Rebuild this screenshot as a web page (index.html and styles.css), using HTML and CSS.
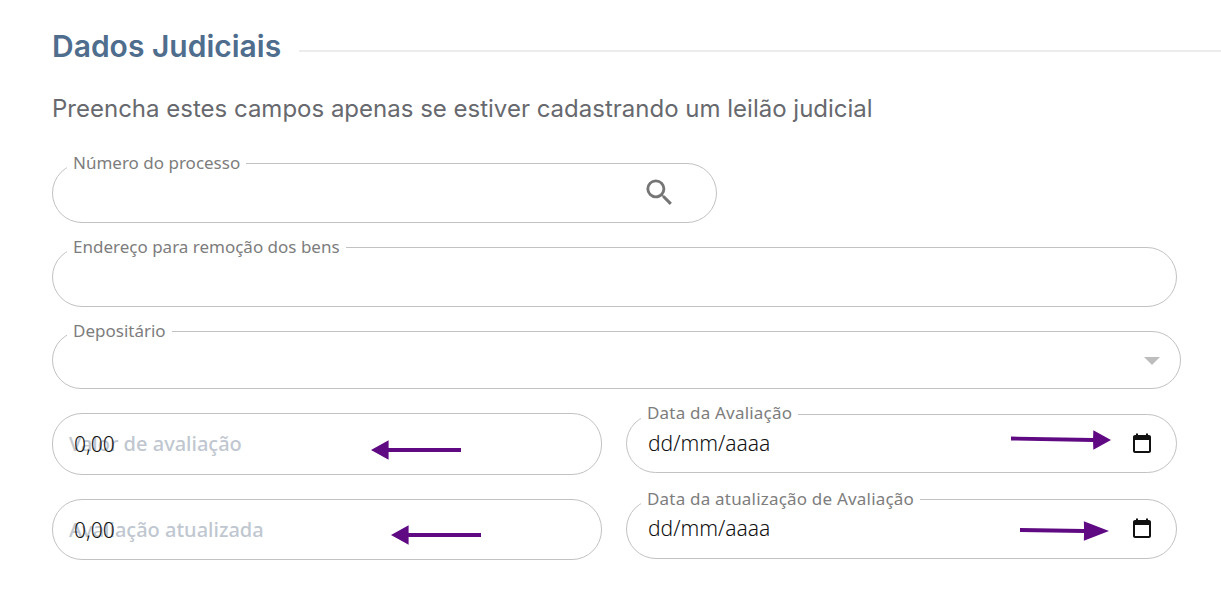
FILE: index.html
```html
<!DOCTYPE html>
<html lang="pt-BR">
<head>
<meta charset="utf-8">
<title>Dados Judiciais</title>
<link rel="stylesheet" href="styles.css">
</head>
<body>
<main class="page">
  <header class="section-head">
    <h2 class="section-title">Dados Judiciais</h2>
    <span class="section-rule"></span>
  </header>
  <p class="section-sub">Preencha estes campos apenas se estiver cadastrando um leilão judicial</p>

  <div class="form">
    <div class="field field-process">
      <span class="label">Número do processo</span>
      <svg class="icon-search" viewBox="0 0 24 24" width="35" height="35"><path fill="#757575" d="M15.5 14h-.79l-.28-.27A6.47 6.47 0 0 0 16 9.5 6.5 6.5 0 1 0 9.5 16c1.61 0 3.09-.59 4.23-1.57l.27.28v.79l5 4.99L20.49 19l-4.99-5zm-6 0C7.01 14 5 11.99 5 9.5S7.01 5 9.5 5 14 7.01 14 9.5 11.99 14 9.5 14z"/></svg>
    </div>

    <div class="field field-address">
      <span class="label">Endereço para remoção dos bens</span>
    </div>

    <div class="field field-select">
      <span class="label">Depositário</span>
      <span class="caret"></span>
    </div>

    <div class="row">
      <div class="field field-money money-a">
        <span class="ghost">Valor de avaliação</span>
        <span class="value">0,00</span>
        <svg class="arrow arrow-a" viewBox="0 0 92 20" width="90" height="20"><path fill="#5f0a82" d="M0 10 18 0v8h74v4H18v8z"/></svg>
      </div>
      <div class="field field-date date-a">
        <span class="label label-date">Data da Avaliação</span>
        <span class="date-text">dd/mm/aaaa</span>
        <svg class="arrow arrow-c" viewBox="0 0 102 20" width="100" height="20"><path fill="#5f0a82" d="M102 10 84 0l-.3 8L0 6.500v4L83.700 12l.3 8z"/></svg>
        <svg class="icon-cal" viewBox="0 0 24 24" width="24" height="24"><path fill="#111" d="M19 4h-1V2.500h-2V4H8V2.500H6V4H5c-1.100 0-2 .9-2 2v14c0 1.100.9 2 2 2h14c1.100 0 2-.9 2-2V6c0-1.100-.9-2-2-2zm0 16H5V9h14v11z"/></svg>
      </div>
    </div>

    <div class="row">
      <div class="field field-money money-b">
        <span class="ghost">Avaliação atualizada</span>
        <span class="value">0,00</span>
        <svg class="arrow arrow-b" viewBox="0 0 92 20" width="90" height="20"><path fill="#5f0a82" d="M0 10 18 0v8h74v4H18v8z"/></svg>
      </div>
      <div class="field field-date date-b">
        <span class="label label-date">Data da atualização de Avaliação</span>
        <span class="date-text">dd/mm/aaaa</span>
        <svg class="arrow arrow-d" viewBox="0 0 92 20" width="89" height="20"><path fill="#5f0a82" d="M92 10 66 0l.200 8L0 7v4l66.200 1-.2 8z"/></svg>
        <svg class="icon-cal" viewBox="0 0 24 24" width="24" height="24"><path fill="#111" d="M19 4h-1V2.500h-2V4H8V2.500H6V4H5c-1.100 0-2 .9-2 2v14c0 1.100.9 2 2 2h14c1.100 0 2-.9 2-2V6c0-1.100-.9-2-2-2zm0 16H5V9h14v11z"/></svg>
      </div>
    </div>
  </div>
</main>
</body>
</html>
```

FILE: styles.css
```css
* { box-sizing: border-box; }

html, body {
  margin: 0;
  height: 100%;
  background: #fff;
  overflow: hidden;
}

.page {
  padding: 26px 0 0 52px;
  font-family: "Noto Sans", "Open Sans", sans-serif;
}

.section-head {
  display: flex;
  align-items: center;
  gap: 18px;
  height: 40px;
}

.section-title {
  margin: 0;
  font-family: Inter, "Liberation Sans", sans-serif;
  font-size: 30px;
  font-weight: 600;
  line-height: 40px;
  color: #4f6d8d;
  white-space: nowrap;
}

.section-rule {
  flex: 1;
  height: 2px;
  margin-top: 9px;
  background: #ececec;
}

.section-sub {
  margin: 27px 0 0;
  font-family: Inter, "Liberation Sans", sans-serif;
  font-size: 24px;
  line-height: 32px;
  color: #67696e;
}

.form {
  display: flex;
  flex-direction: column;
  gap: 24px;
  margin-top: 38px;
}

.field {
  position: relative;
  height: 60px;
  border: 1px solid #c2c2c2;
  border-radius: 30px;
  background: #fff;
}

.field-process { width: 665px; }
.field-address { width: 1125px; }
.field-select { width: 1129px; height: 58px; }

.label {
  position: absolute;
  top: -11px;
  left: 14px;
  padding: 0 6px;
  background: #fff;
  font-size: 17px;
  line-height: 20px;
  color: #7d7d7d;
  white-space: nowrap;
}

.label-date { letter-spacing: 0.2px; }
.date-a .label-date { top: -12px; }

.icon-search {
  position: absolute;
  top: 11px;
  left: 589px;
}

.caret {
  position: absolute;
  top: 25px;
  right: 20px;
  border-left: 8px solid transparent;
  border-right: 8px solid transparent;
  border-top: 8px solid #bdbdbd;
}

.row {
  display: grid;
  grid-template-columns: 550px 551px;
  gap: 24px;
  align-items: start;
}

.money-a { height: 62px; }
.money-b { height: 61px; }
.date-a { height: 59px; margin-top: 1px; }
.date-b { height: 60px; }

.ghost {
  position: absolute;
  top: 16px;
  left: 16px;
  font-size: 20px;
  font-weight: 500;
  line-height: 28px;
  color: #c0c7d0;
  white-space: nowrap;
}

.value {
  position: absolute;
  top: 16px;
  left: 21px;
  font-size: 21px;
  font-weight: 300;
  line-height: 28px;
  color: #111;
}

.date-text {
  position: absolute;
  top: 14px;
  left: 21px;
  font-size: 21px;
  font-weight: 300;
  line-height: 28px;
  color: #111;
  white-space: nowrap;
}

.icon-cal {
  position: absolute;
  top: 16px;
  right: 22px;
}

.arrow { position: absolute; }
.arrow-a { top: 26px; left: 318px; }
.arrow-b { top: 25px; left: 338px; }
.arrow-c { top: 15px; left: 384px; }
.arrow-d { top: 21px; left: 393px; }
```
